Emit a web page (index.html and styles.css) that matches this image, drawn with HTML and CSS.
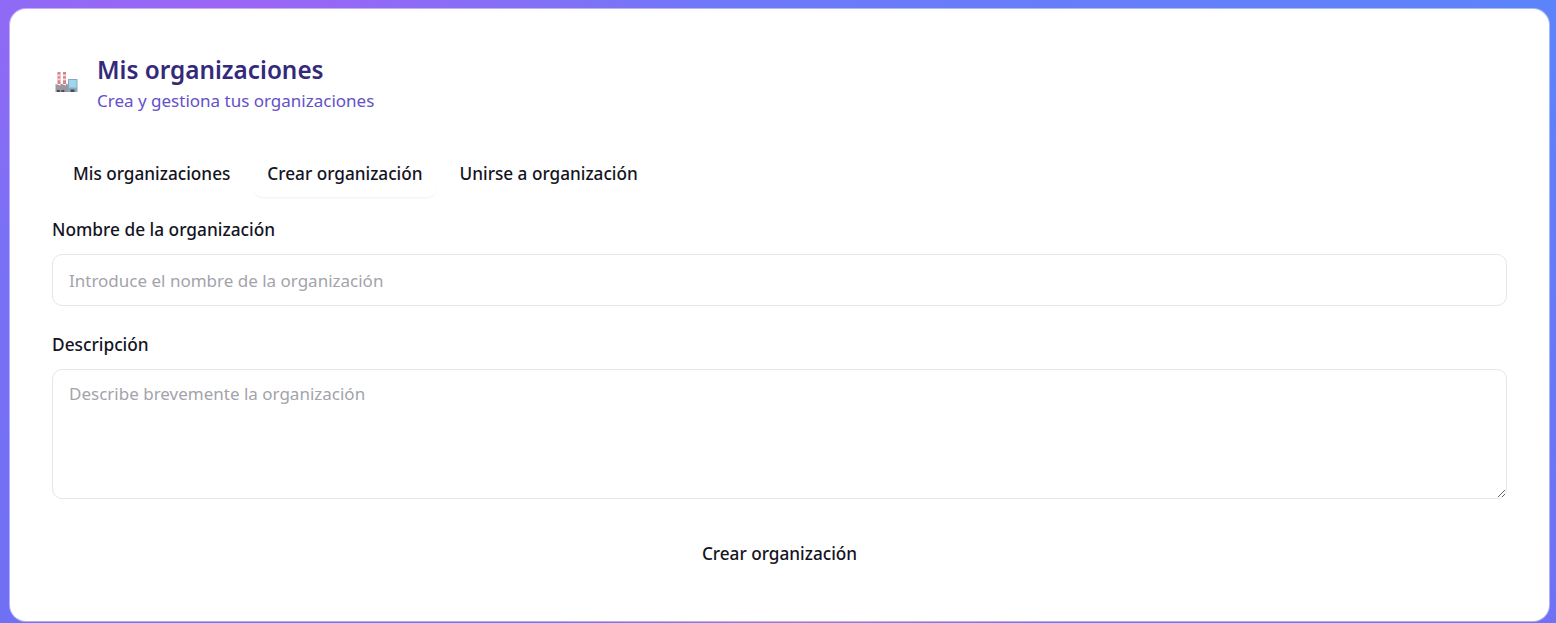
FILE: index.html
```html
<!DOCTYPE html>
<html lang="es">
<head>
<meta charset="utf-8">
<title>Mis organizaciones</title>
<link rel="stylesheet" href="styles.css">
</head>
<body>
<main class="card">
  <header class="head">
    <svg class="icon" viewBox="0 0 24 24" width="24" height="24" aria-hidden="true">
      <rect x="2.500" y="1" width="3" height="12" fill="#d9808c"/>
      <rect x="2.500" y="3.500" width="3" height="1.800" fill="#f3d9dd"/>
      <rect x="2.500" y="7.500" width="3" height="1.800" fill="#f3d9dd"/>
      <rect x="8" y="1" width="3" height="12" fill="#d9808c"/>
      <rect x="8" y="3.500" width="3" height="1.800" fill="#f3d9dd"/>
      <rect x="8" y="7.500" width="3" height="1.800" fill="#f3d9dd"/>
      <path d="M.5 21v-8l5 1.500V12.500l5.500 2V12.500l2 1V21z" fill="#9a989e"/>
      <rect x="13" y="8" width="9.500" height="13" fill="#8aa9bf"/>
      <rect x="14" y="9" width="7.500" height="7.500" fill="#9fd6ee"/>
      <rect x="2" y="19" width="2.800" height="2" fill="#4c4c52"/>
      <rect x="6.500" y="19" width="2.800" height="2" fill="#4c4c52"/>
      <rect x="15.500" y="18.500" width="4" height="2.500" fill="#4c4c52"/>
    </svg>
    <div class="titles">
      <h1 class="title">Mis organizaciones</h1>
      <p class="subtitle">Crea y gestiona tus organizaciones</p>
    </div>
  </header>
  <nav class="tabs">
    <button class="tab" type="button">Mis organizaciones</button>
    <button class="tab active" type="button">Crear organización</button>
    <button class="tab" type="button">Unirse a organización</button>
  </nav>
  <form class="form">
    <label class="label" for="nombre">Nombre de la organización</label>
    <input class="field input" id="nombre" type="text" placeholder="Introduce el nombre de la organización">
    <label class="label second" for="desc">Descripción</label>
    <textarea class="field area" id="desc" placeholder="Describe brevemente la organización"></textarea>
    <button class="submit" type="button">Crear organización</button>
  </form>
</main>
</body>
</html>
```
FILE: styles.css
```css
* { box-sizing: border-box; }
html, body { height: 100%; }
body {
  margin: 0;
  padding: 9px 7px 1px 10px;
  background:
    radial-gradient(ellipse 260px 30px at 800px 100%, rgba(190, 130, 190, .55) 0%, rgba(190, 130, 190, 0) 100%),
    radial-gradient(ellipse 500px 260px at 230px 0, rgba(160, 100, 245, .9) 0%, rgba(160, 100, 245, 0) 100%),
    linear-gradient(to bottom, rgba(112, 112, 244, 0) 0%, #7070f4 100%),
    linear-gradient(90deg, #7f70f6 0%, #5c84fa 100%);
  font-family: "Noto Sans", sans-serif;
  color: #14141f;
  overflow: hidden;
}
.card {
  height: 612px;
  background: #fff;
  border-radius: 16px;
  padding: 43px 42px 0;
  box-shadow: 0 0 0 1px rgba(255, 255, 255, .45);
}
.head {
  display: flex;
  align-items: center;
  gap: 18px;
  height: 62px;
  padding-left: 3px;
}
.icon { flex: none; }
.title {
  margin: 0;
  font-size: 24.300px;
  line-height: 32px;
  font-weight: 600;
  color: #352a7a;
}
.subtitle {
  margin: 4px 0 0;
  font-size: 17px;
  line-height: 22px;
  color: #6450c8;
}
.tabs {
  display: flex;
  gap: 9px;
  padding: 0 7px;
  margin-top: 35px;
  height: 52px;
  align-items: flex-start;
}
.tab {
  border: 0;
  background: #fff;
  padding: 0 14px;
  height: 46px;
  margin-top: 2px;
  font: 500 17.200px/46px "Noto Sans", sans-serif;
  color: #14141f;
  border-radius: 10px;
}
.tab.active { box-shadow: 0 2px 2px -1px rgba(60, 50, 120, .08); }
.form { display: flex; flex-direction: column; }
.label {
  font-size: 17.300px;
  font-weight: 500;
  line-height: 22px;
  margin-top: 18px;
  margin-bottom: 13px;
}
.label.second { margin-top: 28px; margin-bottom: 13px; }
.field {
  width: 100%;
  border: 1px solid #e6e6ea;
  border-radius: 10px;
  background: #fff;
  padding: 0 16px;
  font: 400 17px "Noto Sans", sans-serif;
  color: #14141f;
  outline: 0;
}
.field::placeholder { color: #a3a3ab; opacity: 1; }
.input { height: 52px; }
.area { height: 130px; padding-top: 12px; display: block; }
.submit {
  align-self: center;
  border: 0;
  background: none;
  margin-top: 43px;
  padding: 0;
  font: 500 17.200px/24px "Noto Sans", sans-serif;
  color: #14141f;
}
```
